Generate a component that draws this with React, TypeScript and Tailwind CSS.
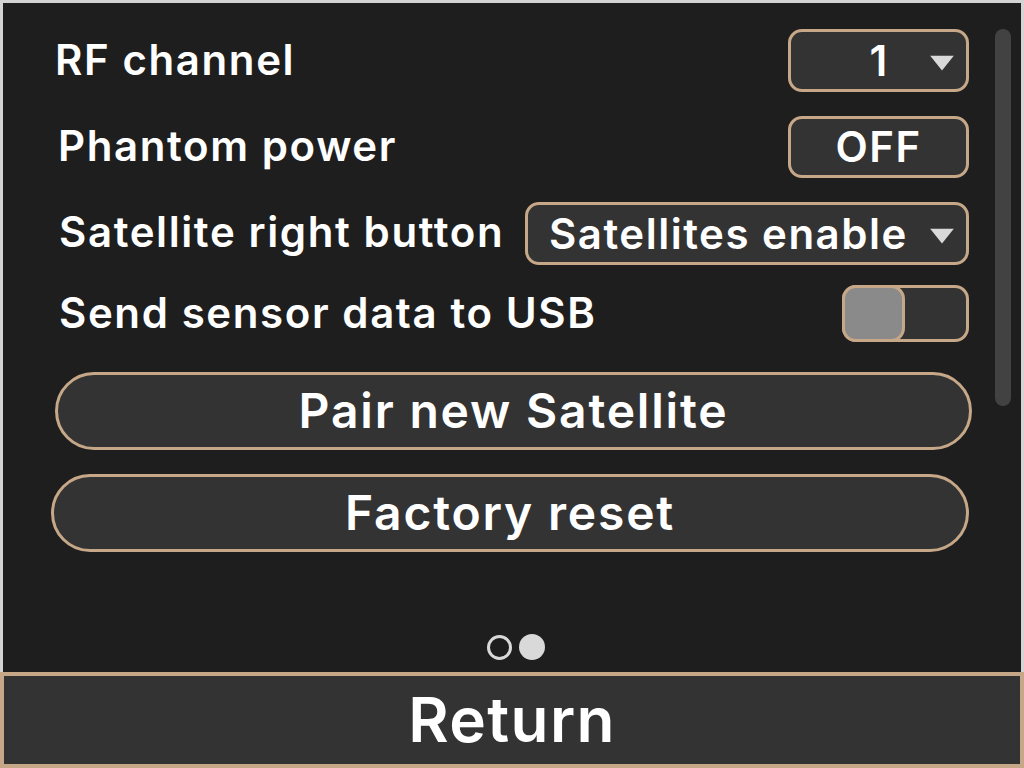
import React from 'react'

const Arrow = () => (
    <svg width="24" height="16" viewBox="0 0 24 16" className="absolute right-[12px] top-1/2 -translate-y-[35%]">
        <path d="M0 0 H24 L12 15 Z" fill="#d9d9d9" />
    </svg>
)

const Label = ({ children, className = '' }: { children: React.ReactNode; className?: string }) => (
    <div className={`text-[42px] tracking-[1.6px] font-semibold text-white leading-none whitespace-nowrap ${className}`}>{children}</div>
)

export default function App() {
    return (
        <div className="w-[1024px] h-[768px] flex flex-col select-none" style={{ fontFamily: 'Inter, "Noto Sans", sans-serif' }}>
            <div className="relative flex-1 border-t-[3px] border-x-[3px] border-[#d4d4d4] bg-[#1e1e1e] flex flex-col pt-[26px] pl-[52px] pr-[52px]">
                {/* scrollbar */}
                <div className="absolute left-[992px] top-[26px] w-[16px] h-[377px] rounded-full bg-[#424242]" />

                <div className="flex items-center justify-between h-[63px]">
                    <Label className="-mt-[2px]">RF channel</Label>
                    <div className="relative w-[181px] h-full rounded-[14px] border-[3px] border-[#c6a888] bg-[#333333] flex items-center justify-center">
                        <span className="text-[42px] font-semibold text-white leading-none">1</span>
                        <Arrow />
                    </div>
                </div>

                <div className="flex items-center justify-between h-[62px] mt-[24px]">
                    <Label className="ml-[3px] -mt-[3px]">Phantom power</Label>
                    <div className="w-[181px] h-full rounded-[14px] border-[3px] border-[#c6a888] bg-[#333333] flex items-center justify-center">
                        <span className="text-[42px] tracking-[1.5px] font-semibold text-white leading-none">OFF</span>
                    </div>
                </div>

                <div className="flex items-center justify-between h-[63px] mt-[24px]">
                    <Label className="ml-[4px] -mt-[4px]">Satellite right button</Label>
                    <div className="relative w-[444px] h-full rounded-[14px] border-[3px] border-[#c6a888] bg-[#333333] flex items-center pl-[21px]">
                        <span className="text-[42px] tracking-[1.5px] font-semibold text-white leading-none whitespace-nowrap">Satellites enable</span>
                        <Arrow />
                    </div>
                </div>

                <div className="flex items-center justify-between h-[57px] mt-[20px]">
                    <Label className="ml-[4px] -mt-[1px]">Send sensor data to USB</Label>
                    <div className="w-[127px] h-full rounded-[14px] border-[3px] border-[#c6a888] bg-[#333333] flex">
                        <div className="w-[63px] -m-[3px] h-[57px] rounded-[14px] border-[3px] border-[#c6a888] bg-[#8a8a8a]" />
                    </div>
                </div>

                <button className="mt-[30px] h-[78px] w-[917px] rounded-full border-[3px] border-[#c6a888] bg-[#333333] text-white text-[48px] tracking-[1.8px] font-semibold leading-none">
                    Pair new Satellite
                </button>

                <button className="mt-[24px] -ml-[4px] h-[78px] w-[918px] rounded-full border-[3px] border-[#c6a888] bg-[#333333] text-white text-[48px] tracking-[1.8px] font-semibold leading-none">
                    Factory reset
                </button>

                <div className="flex-1 flex items-end justify-center pb-[12px] gap-[7px] ml-[7px]">
                    <div className="w-[25px] h-[25px] rounded-full border-[3px] border-[#d9d9d9]" />
                    <div className="w-[26px] h-[26px] rounded-full bg-[#d9d9d9]" />
                </div>
            </div>

            <button className="h-[96px] w-full border-[4px] border-[#c6a888] bg-[#333333] text-white text-[62px] tracking-[1.4px] font-semibold leading-none flex items-center justify-center">
                Return
            </button>
        </div>
    )
}
